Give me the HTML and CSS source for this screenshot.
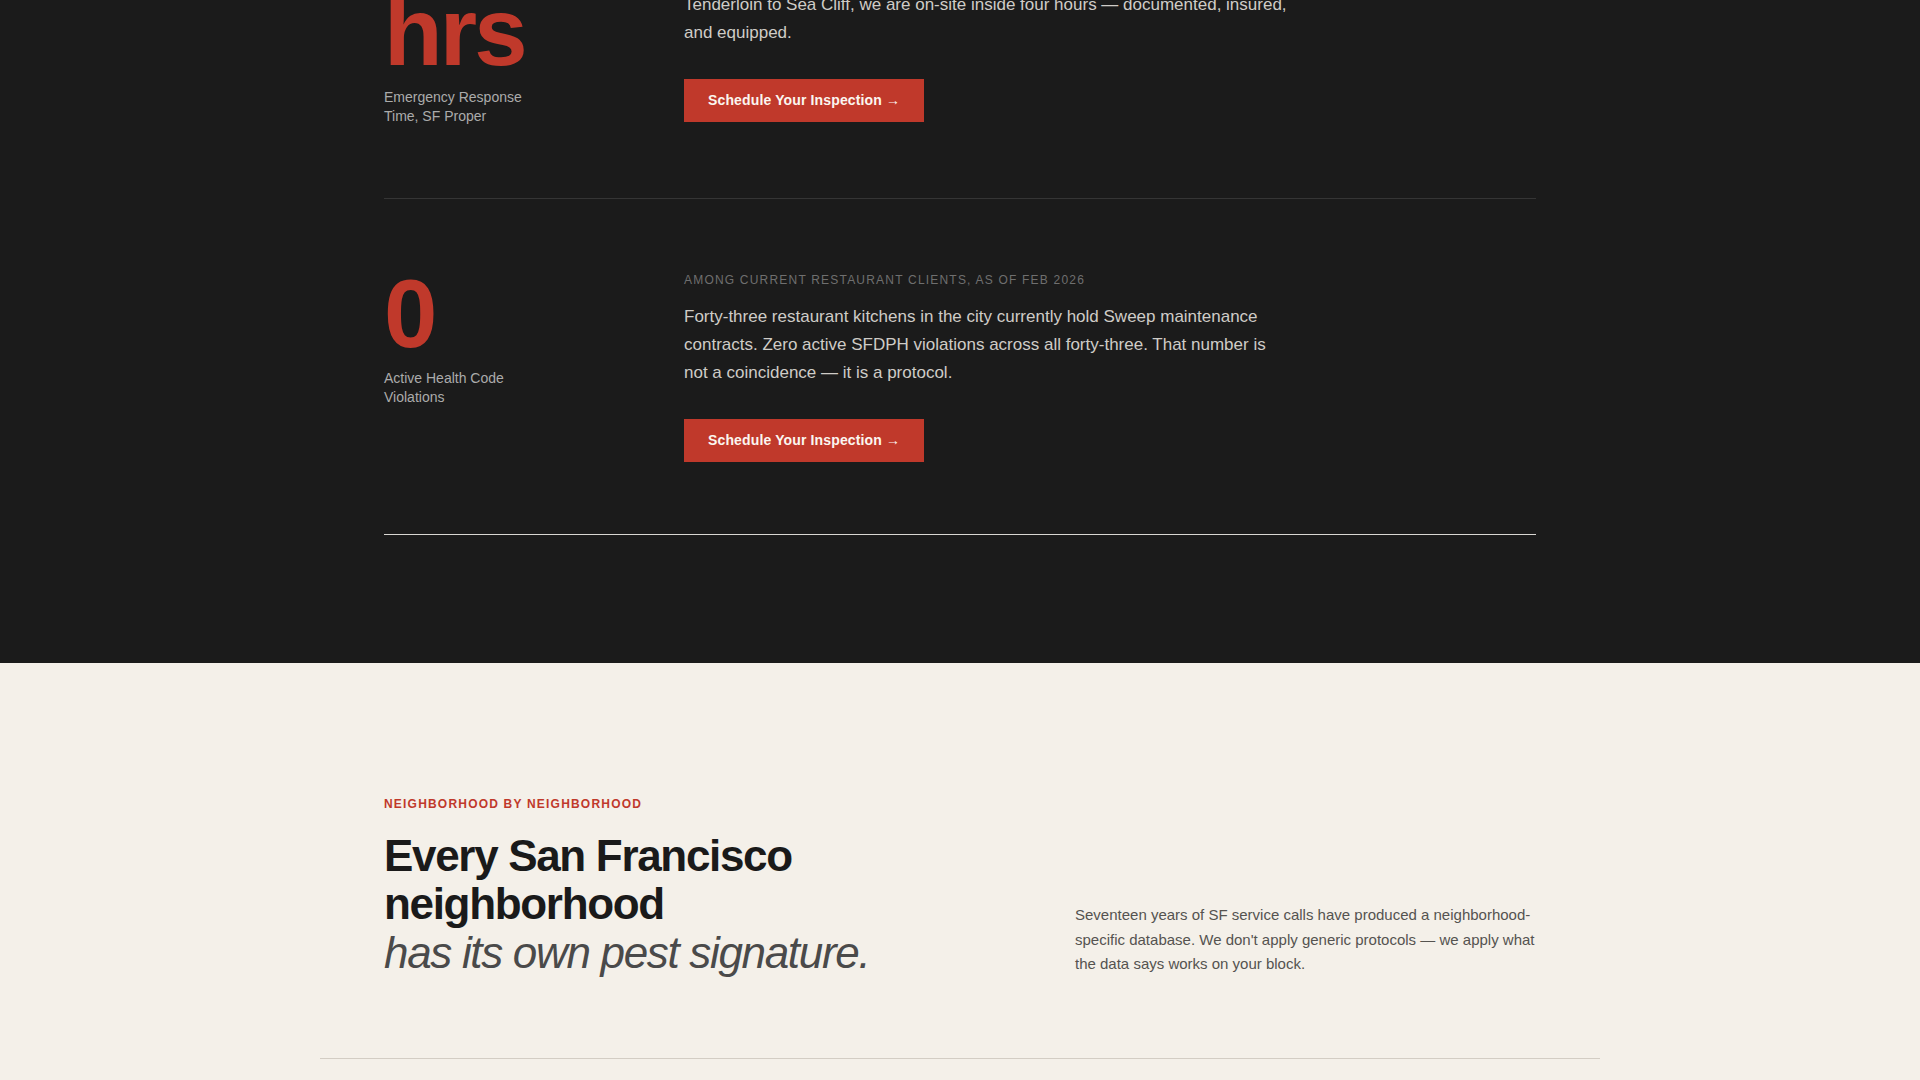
FILE: index.html
```html
<!DOCTYPE html>
<html lang="en">
<head>
<meta charset="utf-8">
<title>Sweep — San Francisco</title>
<link rel="stylesheet" href="styles.css">
</head>
<body>
<div class="page">
  <section class="dark">
    <div class="container">
      <div class="stats">
        <div class="stat">
          <div class="stat-left">
            <div class="stat-num">&lt;4<br>hrs</div>
            <div class="stat-label">Emergency Response Time, SF Proper</div>
          </div>
          <div class="stat-right">
            <div class="stat-eyebrow">Average across 2025 service calls</div>
            <p class="stat-text">When something goes wrong at 2 a.m., waiting until Monday is not an option. From the Mission to the Marina, Bayview to the Richmond,<br>Tenderloin to Sea Cliff, we are on-site inside four hours — documented, insured, and equipped.</p>
            <a class="btn" href="#">Schedule Your Inspection →</a>
          </div>
        </div>
        <div class="stat">
          <div class="stat-left">
            <div class="stat-num">0</div>
            <div class="stat-label">Active Health Code Violations</div>
          </div>
          <div class="stat-right">
            <div class="stat-eyebrow">Among current restaurant clients, as of Feb 2026</div>
            <p class="stat-text">Forty-three restaurant kitchens in the city currently hold Sweep maintenance contracts. Zero active SFDPH violations across all forty-three. That number is not a coincidence — it is a protocol.</p>
            <a class="btn" href="#">Schedule Your Inspection →</a>
          </div>
        </div>
      </div>
    </div>
  </section>

  <section class="cream">
    <div class="container">
      <div class="hood-head">
        <div class="hood-title">
          <div class="eyebrow">Neighborhood by neighborhood</div>
          <h2 class="h2">Every San Francisco neighborhood <span class="h2-soft">has its own pest signature.</span></h2>
        </div>
        <p class="hood-intro">Seventeen years of SF service calls have produced a neighborhood-specific database. We don't apply generic protocols — we apply what the data says works on your block.</p>
      </div>
    </div>
    <div class="wide">
      <div class="hood-grid">
        <div class="hood-cell">Mission</div>
        <div class="hood-cell">Marina</div>
        <div class="hood-cell">Richmond</div>
      </div>
    </div>
  </section>
</div>
</body>
</html>
```

FILE: styles.css
```css
* { box-sizing: border-box; }

html, body {
  margin: 0;
  padding: 0;
}

body {
  font-family: "Liberation Sans", Arial, Helvetica, sans-serif;
  background: #1b1b1b;
}

.page {
  margin-top: -169px;
}

.container {
  width: 1152px;
  margin: 0 auto;
}

.wide {
  width: 1280px;
  margin: 0 auto;
}

/* ---------- dark stats ---------- */
.dark {
  background: #1b1b1b;
  padding-bottom: 128px;
}

.stats {
  border-bottom: 1px solid #d9d7d3;
}

.stat {
  display: grid;
  grid-template-columns: 300px 1fr;
  padding: 72px 0;
}

.stat + .stat {
  border-top: 1px solid #353535;
}

.stat-num {
  font-size: 96px;
  font-weight: 700;
  line-height: 0.9;
  letter-spacing: -0.03em;
  color: #c0392b;
}

.stat-label {
  margin-top: 12px;
  max-width: 160px;
  font-size: 14px;
  line-height: 19px;
  color: #ababab;
}

.stat-eyebrow {
  font-size: 12px;
  line-height: 18px;
  letter-spacing: 0.1em;
  text-transform: uppercase;
  color: #6f6f6f;
  margin-bottom: 14px;
}

.stat-text {
  margin: 0 0 32px;
  max-width: 608px;
  font-size: 17px;
  line-height: 28px;
  color: #cfccc7;
}

.btn {
  display: inline-block;
  background: #c0392b;
  color: #fbf6f0;
  font-size: 14px;
  font-weight: 700;
  line-height: 19px;
  letter-spacing: 0.01em;
  padding: 12px 24px;
  text-decoration: none;
}

/* ---------- cream ---------- */
.cream {
  background: #f4f0e9;
  padding-top: 132px;
  padding-bottom: 120px;
}

.hood-head {
  display: flex;
  justify-content: space-between;
  align-items: flex-end;
  margin-bottom: 81px;
}

.eyebrow {
  font-size: 12px;
  line-height: 18px;
  font-weight: 700;
  letter-spacing: 0.1em;
  text-transform: uppercase;
  color: #c0392b;
  margin-bottom: 19px;
}

.h2 {
  margin: 0;
  max-width: 560px;
  font-size: 44px;
  line-height: 1.1;
  font-weight: 700;
  letter-spacing: -0.03em;
  color: #1a1a1a;
}

.h2-soft {
  display: block;
  font-weight: 400;
  font-style: italic;
  color: #4a4a4a;
}

.hood-intro {
  flex: 0 0 461px;
  margin: 0;
  font-size: 15px;
  line-height: 24.5px;
  color: #555350;
}

.hood-grid {
  display: grid;
  grid-template-columns: repeat(3, 1fr);
  border-top: 1px solid #d3cdc4;
}

.hood-cell {
  padding: 40px 32px;
  font-size: 18px;
  font-weight: 700;
  color: #1a1a1a;
}
```
